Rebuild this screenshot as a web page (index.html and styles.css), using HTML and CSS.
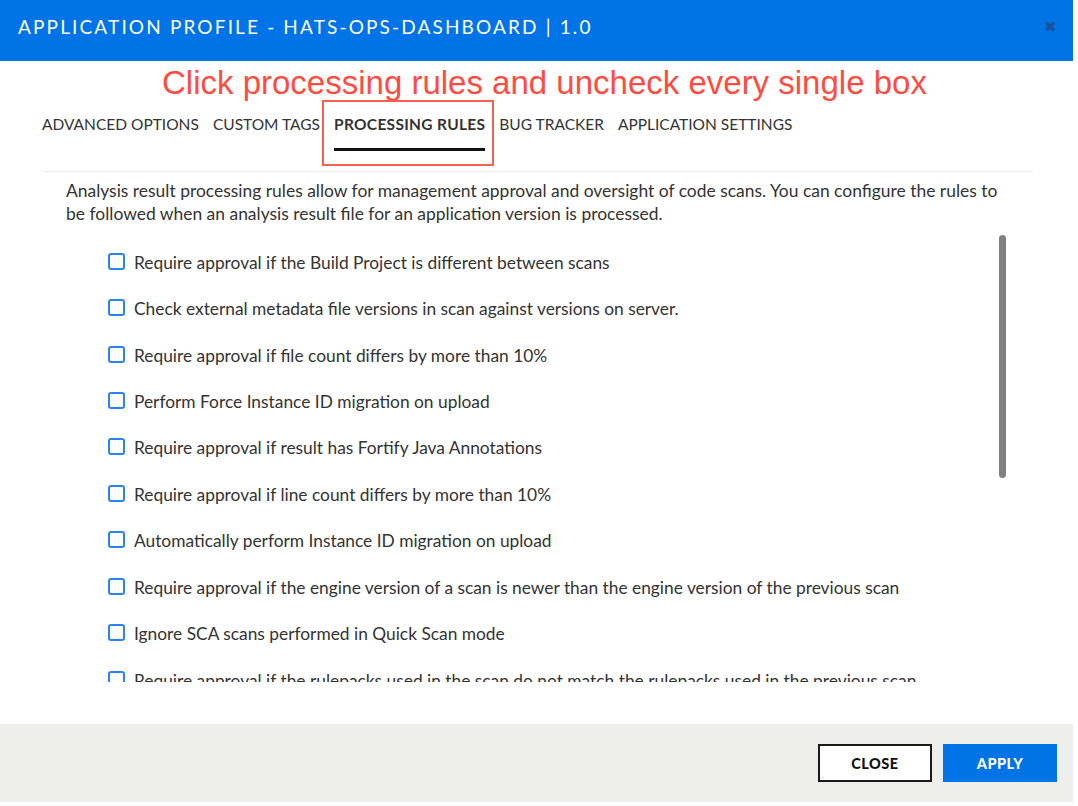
FILE: index.html
```html
<!DOCTYPE html>
<html lang="en">
<head>
<meta charset="utf-8">
<title>Application Profile</title>
<link rel="stylesheet" href="styles.css">
</head>
<body>
<div class="dialog">
  <header class="dlg-header">
    <h1 class="dlg-title">APPLICATION PROFILE - HATS-OPS-DASHBOARD | 1.0</h1>
    <span class="dlg-close">&#x2716;</span>
  </header>

  <div class="annotation">Click processing rules and uncheck every single box</div>

  <nav class="tabs">
    <span class="tab">ADVANCED OPTIONS</span>
    <span class="tab">CUSTOM TAGS</span>
    <span class="tab tab-active">PROCESSING RULES<span class="callout"></span></span>
    <span class="tab">BUG TRACKER</span>
    <span class="tab">APPLICATION SETTINGS</span>
  </nav>

  <div class="content">
    <p class="intro">Analysis result processing rules allow for management approval and oversight of code scans. You can configure the rules to be followed when an analysis result file for an application version is processed.</p>
    <div class="rules-wrap">
      <ul class="rules">
        <li class="rule"><span class="cb"></span>Require approval if the Build Project is different between scans</li>
        <li class="rule"><span class="cb"></span>Check external metadata file versions in scan against versions on server.</li>
        <li class="rule"><span class="cb"></span>Require approval if file count differs by more than 10%</li>
        <li class="rule"><span class="cb"></span>Perform Force Instance ID migration on upload</li>
        <li class="rule"><span class="cb"></span>Require approval if result has Fortify Java Annotations</li>
        <li class="rule"><span class="cb"></span>Require approval if line count differs by more than 10%</li>
        <li class="rule"><span class="cb"></span>Automatically perform Instance ID migration on upload</li>
        <li class="rule"><span class="cb"></span>Require approval if the engine version of a scan is newer than the engine version of the previous scan</li>
        <li class="rule"><span class="cb"></span>Ignore SCA scans performed in Quick Scan mode</li>
        <li class="rule"><span class="cb"></span>Require approval if the rulepacks used in the scan do not match the rulepacks used in the previous scan</li>
        <li class="rule"><span class="cb"></span>Require approval if SCA or WebInspect Agent scan does not have valid certification</li>
        <li class="rule"><span class="cb"></span>Require approval if result has analysis warnings</li>
      </ul>
      <div class="scroll-thumb"></div>
    </div>
  </div>

  <footer class="dlg-footer">
    <button class="btn btn-close">CLOSE</button>
    <button class="btn btn-apply">APPLY</button>
  </footer>
</div>
</body>
</html>
```

FILE: styles.css
```css
* { box-sizing: border-box; }

body {
  margin: 0;
  background: #ffffff;
  font-family: "Lato", "Open Sans", sans-serif;
  color: #333333;
}

.dialog {
  width: 1073px;
  height: 802px;
  display: flex;
  flex-direction: column;
  background: #ffffff;
}

.dlg-header {
  height: 61px;
  flex: none;
  background: #0073e7;
  display: flex;
  align-items: center;
  justify-content: space-between;
  padding: 0 16px 8px 18px;
}

.dlg-title {
  margin: 0;
  font-size: 19px;
  font-weight: 400;
  letter-spacing: 2.15px;
  color: #ffffff;
}

.dlg-close {
  color: #1b4f97;
  font-size: 15px;
}

.annotation {
  margin-top: 4px;
  padding-left: 162px;
  font-family: "Liberation Sans", Arial, sans-serif;
  font-size: 33px;
  line-height: 36px;
  color: #ff4b40;
}

.tabs {
  display: flex;
  gap: 14px;
  padding-left: 42px;
  margin-top: 13px;
}

.tab {
  position: relative;
  font-size: 15.5px;
  line-height: 20px;
  padding-bottom: 14px;
  color: #333333;
}

.tab-active {
  font-weight: 700;
  letter-spacing: 0.3px;
  border-bottom: 3px solid #111111;
}

.callout {
  position: absolute;
  left: -12px;
  right: -9px;
  top: -14px;
  bottom: -18px;
  border: 2px solid #f4624f;
}

.content {
  flex: 1;
  margin: 20px 40px 0 42px;
  border-top: 1px solid #ececec;
  display: flex;
  flex-direction: column;
  min-height: 0;
}

.intro {
  margin: 7px 30px 0 24px;
  font-size: 17.45px;
  line-height: 23px;
  color: #333333;
}

.rules-wrap {
  position: relative;
  margin-top: 10px;
  height: 447px;
  overflow: hidden;
}

.rules {
  list-style: none;
  margin: 0;
  padding: 4px 0 0 66px;
}

.rule {
  display: flex;
  align-items: center;
  height: 46.45px;
  font-size: 17.35px;
  color: #333333;
}

.cb {
  width: 17px;
  height: 17px;
  border: 2px solid #2a84ee;
  border-radius: 3px;
  margin-right: 9px;
  margin-top: -2px;
  flex: none;
}

.scroll-thumb {
  position: absolute;
  left: 957px;
  top: 0;
  width: 7px;
  height: 243px;
  border-radius: 4px;
  background: #808080;
}

.dlg-footer {
  height: 78px;
  flex: none;
  background: #eeeeec;
  display: flex;
  align-items: center;
  justify-content: flex-end;
  gap: 11px;
  padding-right: 16px;
  margin-top: 40px;
}

.btn {
  width: 114px;
  height: 38px;
  font-family: "Lato", "Open Sans", sans-serif;
  font-size: 14.5px;
  font-weight: 900;
  letter-spacing: 0.5px;
  cursor: pointer;
}

.btn-close {
  background: #ffffff;
  border: 2px solid #1a1a1a;
  color: #111111;
}

.btn-apply {
  background: #0073e7;
  border: 1px solid #0073e7;
  color: #ffffff;
}
```
